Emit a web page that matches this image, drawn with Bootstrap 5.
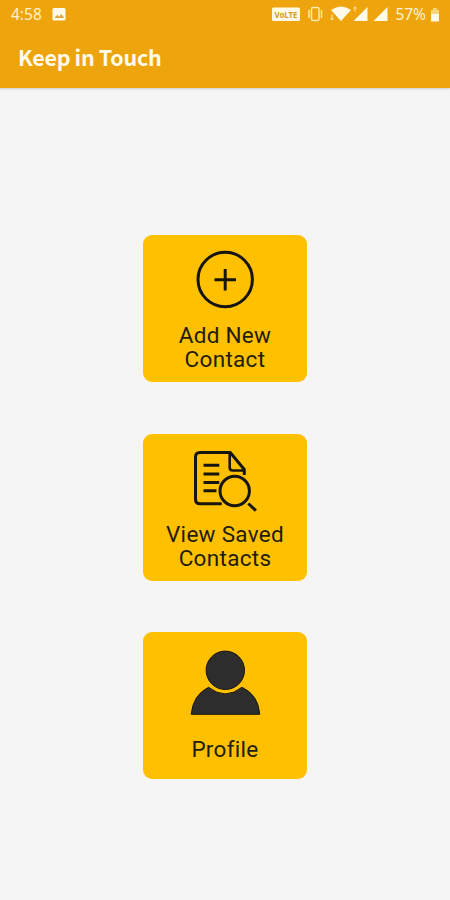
<!DOCTYPE html>
<html lang="en">
<head>
<meta charset="utf-8">
<meta name="viewport" content="width=device-width, initial-scale=1">
<title>Keep in Touch</title>
<link href="https://cdn.jsdelivr.net/npm/bootstrap@5.3.0/dist/css/bootstrap.min.css" rel="stylesheet">
<style>
body { background: #f5f5f5; height: 900px; overflow: hidden; }
.app-top { background: #eea40d; height: 88px; box-shadow: 0 1px 2px rgba(0,0,0,.16); color: #fffbea; }
.status-bar { height: 29px; padding-left: 11px; padding-right: 10px; font: 15.5px/29px "Noto Sans", sans-serif; color: #fff3cd; }
.status-bar svg { display: block; }
.app-title { height: 59px; padding-left: 18px; font: 700 21.5px/55px "Noto Sans CJK SC", sans-serif; letter-spacing: -.2px; word-spacing: -.5px; }
.tiles { padding-top: 147px; gap: 51.5px; }
.tile { width: 164px; height: 147px; border: 0; border-radius: 9px; background: #ffc000; color: #221c0c; font: 400 22.5px/24px Roboto, sans-serif; letter-spacing: .3px; }
.tile:hover, .tile:active { background: #ffc000; }
.tile svg { display: block; width: 164px; height: 88px; flex: none; }
.tile-single svg { height: 105px; }
</style>
<script src="https://cdn.jsdelivr.net/npm/bootstrap@5.3.0/dist/js/bootstrap.bundle.min.js"></script>
</head>
<body>
<header class="app-top">
  <div class="status-bar d-flex align-items-center justify-content-between">
    <div class="d-flex align-items-center">
      <span id="clock">4:58</span>
      <svg class="ms-2" width="18" height="18" viewBox="0 0 18 18"><rect x="2.500" y="2" width="13" height="12.500" rx="1.500" fill="#fffbe8"/><path d="M4.500 12l2.700-3.300 1.800 2 2.300-2.800 3 4.100z" fill="#e0a63c"/></svg>
    </div>
    <div class="d-flex align-items-center">
      <svg width="120" height="29" viewBox="271 0 120 29" fill="#fffbe8">
        <rect x="272" y="7.500" width="28" height="13.500" rx="1.500"/>
        <text x="274.500" y="17.500" font-family="Noto Sans" font-size="9" font-weight="700" fill="#d59a20" textLength="23" lengthAdjust="spacingAndGlyphs">VoLTE</text>
        <g fill="none" stroke="#ffeab0" stroke-width="1.500"><rect x="311.500" y="7.500" width="7.500" height="13" rx="1.500"/><path d="M309 10v8M321.500 10v8"/></g>
        <path d="M331 10Q341 3 351 10L341 21z"/>
        <path d="M332 14.500v5M330.500 18l1.500 2 1.500-2M355 7v4.500M353.700 8.500l1.300-1.700 1.300 1.700" fill="none" stroke="#ffeab0" stroke-width="1"/>
        <path d="M367.500 7v14h-14zM387.500 7v14h-14z"/>
      </svg>
      <span id="battery" class="ms-1">57%</span>
      <svg class="ms-1" width="10" height="16" viewBox="0 0 10 16"><path d="M3 1h4v2h2v5H1V3h2z" fill="#f8d67c"/><path d="M1 7h8v7.500H1z" fill="#fffbe8"/></svg>
    </div>
  </div>
  <div class="app-title"><span>Keep in Touch</span></div>
</header>
<main class="tiles d-flex flex-column align-items-center">
  <button class="tile btn p-0 d-flex flex-column align-items-center" type="button">
    <svg viewBox="0 0 164 88" fill="none" stroke="#17150f" stroke-width="3"><circle cx="82.200" cy="44.500" r="27.200"/><path d="M71.500 44.700h21.500M82.200 34v21.500"/></svg>
    <div><div>Add New</div><div>Contact</div></div>
  </button>
  <button class="tile btn p-0 d-flex flex-column align-items-center" type="button">
    <svg viewBox="0 0 164 88" fill="none" stroke="#17150f" stroke-width="3" stroke-linejoin="round">
      <path d="M78.700 69.700H57q-4.500 0-4.500-4.500V23q0-4.500 4.500-4.500H87.200L101.300 35.500V41"/>
      <path d="M86.700 19v14.500q0 3 3 3h11.500" stroke-width="2.600"/>
      <path d="M60.500 31.300H76.300M60.500 40H76.300M60.500 48.500H76.300M60.500 56.700H73.500"/>
      <circle cx="91.700" cy="57" r="14.700"/><path d="M105.300 69.500l7.600 7.200"/>
    </svg>
    <div><div>View Saved</div><div>Contacts</div></div>
  </button>
  <button class="tile tile-single btn p-0 d-flex flex-column align-items-center" type="button">
    <svg viewBox="0 0 164 105" fill="#2d2d2d" stroke="#17150f" stroke-width="1"><circle cx="82.300" cy="38.300" r="19.200"/><path d="M65.500 55.300Q82.300 68.500 99 55.300Q115.500 63 116.700 82.300H48.200Q50 63 65.500 55.300z" stroke-linejoin="round"/></svg>
    <div>Profile</div>
  </button>
</main>
</body>
</html>
